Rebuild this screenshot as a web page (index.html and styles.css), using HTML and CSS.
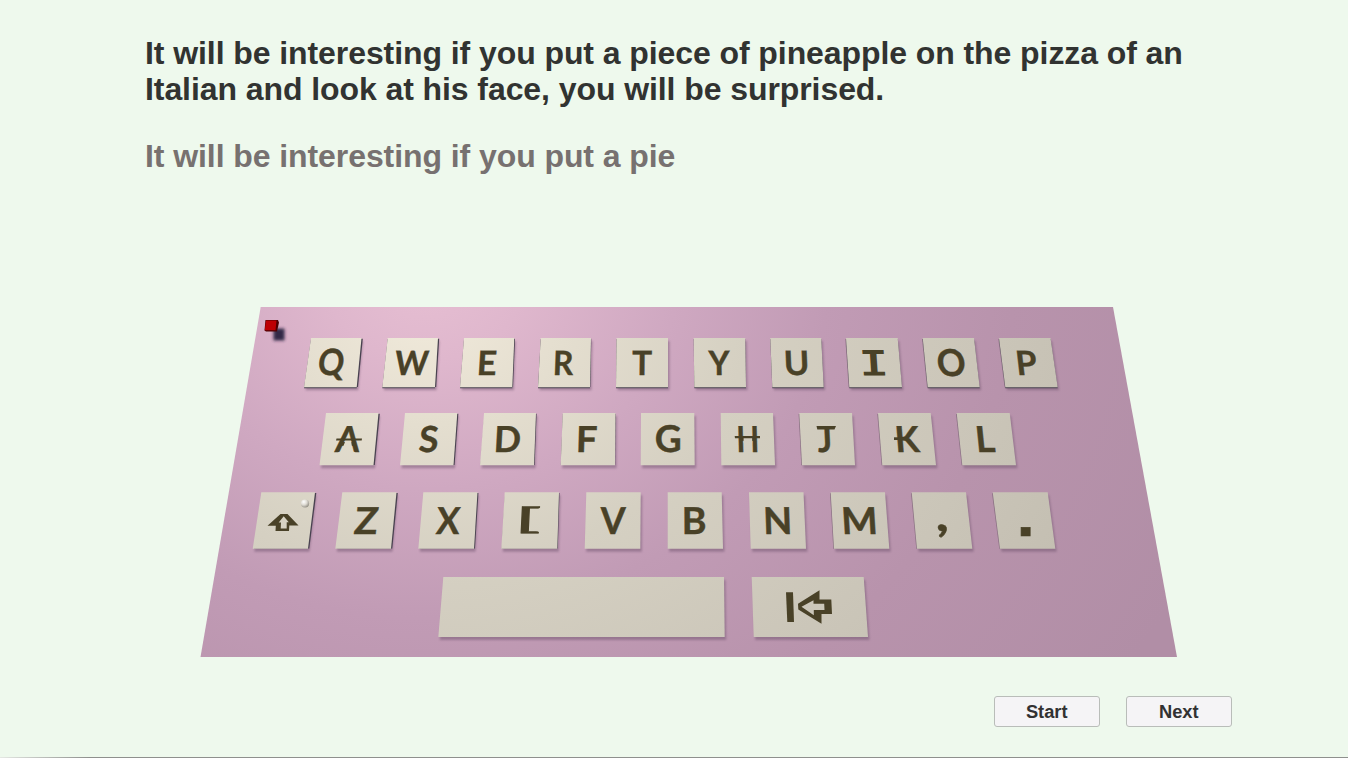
FILE: index.html
```html
<!DOCTYPE html>
<html lang="en">
<head>
<meta charset="utf-8">
<title>Typing exercise</title>
<link rel="stylesheet" href="styles.css">
</head>
<body>
<main class="page">
  <section class="prompt">
    <p class="sentence">It will be interesting if you put a piece of pineapple on the pizza of an<br>Italian and look at his face, you will be surprised.</p>
    <p class="typed">It will be interesting if you put a pie</p>
  </section>
  <svg class="board" viewBox="190 300 1000 370" width="1000" height="370" role="img" aria-label="Keyboard">
    <defs>
      <radialGradient id="felt" gradientUnits="userSpaceOnUse" cx="0" cy="0" r="840" gradientTransform="translate(425 275) scale(1 .85)">
        <stop offset="0" stop-color="#e7bfd3"/><stop offset=".12" stop-color="#dfb7cd"/><stop offset=".3" stop-color="#cfa8c1"/><stop offset=".48" stop-color="#c19bb5"/><stop offset=".7" stop-color="#b893ac"/><stop offset="1" stop-color="#b18ea6"/>
      </radialGradient>
      <radialGradient id="face" gradientUnits="userSpaceOnUse" cx="0" cy="0" r="720" gradientTransform="translate(425 310) scale(1 .8)">
        <stop offset="0" stop-color="#f1eadb"/><stop offset=".2" stop-color="#e4decf"/><stop offset=".45" stop-color="#d5d0c2"/><stop offset=".8" stop-color="#cac5b8"/><stop offset="1" stop-color="#c3beb1"/>
      </radialGradient>
      <radialGradient id="pearl" cx=".35" cy=".3" r=".75">
        <stop offset="0" stop-color="#fff"/><stop offset=".5" stop-color="#dedbd3"/><stop offset="1" stop-color="#8e8a80"/>
      </radialGradient>
      <filter id="blur1" x="-20%" y="-20%" width="140%" height="140%"><feGaussianBlur stdDeviation="1.3"/></filter>
      <filter id="blur2" x="-60%" y="-60%" width="220%" height="220%"><feGaussianBlur stdDeviation="1.7"/></filter>
    </defs>
    <path fill="url(#felt)" d="M260.7 307H1113L1177 657H200.500Z"/>
    <g id="keys"></g>
    <g class="key-face">
      <path d="M345.600 440.500H350.900L352.200 447.800H342.700Z"/>
      <path d="M743.600 438H752.100V443H743.700Z"/>
    </g>
    <g class="ink">
      <path d="M336.500 438.500H362L361.700 440.500H336Z"/>
      <path d="M734.700 436H760V438.300H735Z"/>
      <path d="M894 437.300H908V440H894Z"/>
      <path d="M816.500 426H836L834.500 429.500H817.300Z"/>
      <path fill-rule="evenodd" d="M267.500 525.700 280.500 514H287.500L298.500 525.500H289.300L289 531H275.500L275.800 525.700ZM283.700 516.300 278.700 522.500H281L280.700 528.500H286.700V522.300H288.800Z"/>
      <path d="M786 592.300H793L794 622H787.300Z"/>
      <path fill-rule="evenodd" d="M798 603.700 819.500 590.300V599.500H831.300L832 614H821.500V623.700L798.300 609.500ZM801.500 606.700 813.800 615.300V610H824.500L824.200 603.700H813.500V600.300Z"/>
    </g>
    <rect x="273.500" y="328.500" width="11" height="12" fill="#2c2440" opacity=".95" filter="url(#blur2)"/>
    <path fill="#4d0003" d="M265.500 320H278L279 322.500 277 331.500H266L264.500 330.500Z"/>
    <path fill="#bd0004" d="M266 320.500H276.500L275.500 330.300H264.800Z"/>
    <circle cx="305" cy="503.500" r="4.100" fill="url(#pearl)"/>
  </svg>
  <div class="actions">
    <button class="button">Start</button>
    <button class="button">Next</button>
  </div>
</main>
<script src="keys.js"></script>
</body>
</html>
```
FILE: styles.css
```css
* { box-sizing: border-box; }
body { margin: 0; background: #eef9ed; font-family: "Liberation Sans", Arial, sans-serif; }
.page { display: flex; flex-direction: column; height: 758px; overflow: hidden; }
.page::after { content: ""; height: 1px; margin-top: auto; background: linear-gradient(90deg, #e4e8e3, #8e908d 90px); }
.prompt { height: 300px; padding: 34.500px 0 0 145px; font-size: 32px; letter-spacing: -.08px; line-height: 36.500px; font-weight: 700; white-space: nowrap; }
.sentence { margin: 0; color: #313331; }
.typed { margin: 30px 0 0; color: #777170; }
.board { display: block; flex: none; margin-left: 190px; }
.ink { fill: #494127; }
.letter { fill: #494127; stroke: #494127; stroke-width: .4; font-family: Lato, sans-serif; font-weight: 700; }
.letter.slab { font-family: "DejaVu Sans Mono", monospace; font-weight: 400; stroke-width: 1.200; }
.letter.bracket { font-weight: 400; stroke-width: .5; }
.letter.dot { font-family: "Liberation Sans", sans-serif; }
.key-face { fill: url(#face); }
.key-shadow { fill: #694d68; opacity: .45; filter: url(#blur1); }
.key-side { fill: #494250; }
.key-soft { fill: #8b7284; }
.actions { display: flex; gap: 26.500px; margin: 26px 0 0 994px; }
.button { width: 105.500px; height: 31px; padding: 0; border: 1px solid #b9bdb9; border-radius: 3px; background: #f5f4f6; color: #323232; font: 700 18.300px "Liberation Sans", Arial, sans-serif; }
```
FILE: keys.js
```javascript
// Each key: glyph, top-left x, top-right x, bottom-left x, bottom-right x, ink left, ink right, ink top, ink bottom
const rows = [
  { top: 338, bottom: 387.3, capTop: 350.3, base: 374.7, edge: .9, keys: [
    ["Q", 311, 361.5, 304, 356.7, 318.5, 345, 348.8, 380.5], ["W", 387.7, 438, 382.3, 435, 394, 429.5],
    ["E", 464, 514.3, 460, 512.3, 479, 496.5], ["R", 540.7, 591, 538, 590, 555, 574],
    ["T", 616.5, 668, 616, 668, 632.5, 652], ["Y", 693.7, 745.2, 694.3, 746, 708, 730],
    ["U", 770.3, 821.2, 772.3, 823.7, 785.5, 807.5], ["I", 846, 897.7, 849.3, 902, 863, 884.5],
    ["O", 922.7, 974, 927.7, 979.7, 937.5, 964.7, 348.8, 376.3], ["P", 999, 1050.5, 1005.3, 1057.7, 1017, 1037.5]] },
  { top: 413, bottom: 465.3, capTop: 426, base: 452, edge: 0, keys: [
    ["A", 326, 378.5, 319.5, 373.5, 335, 361], ["S", 405, 457.3, 400, 453.5, 418.7, 438.5],
    ["D", 484, 536, 480, 534, 496, 520.5], ["F", 562.7, 615.5, 560.7, 615, 578.5, 597],
    ["G", 641, 694.3, 640.7, 694.7, 656, 680.3, 425.3, 452.7], ["H", 720.7, 773, 721.3, 775, 738.5, 757.3],
    ["J", 799.3, 852, 802, 855, 817.3, 830.5], ["K", 878, 930.7, 882.3, 936, 896.5, 920.5],
    ["L", 956.7, 1009.7, 962.3, 1016, 977, 995.5]] },
  { top: 492.3, bottom: 548.7, capTop: 506.8, base: 533.7, edge: 0, keys: [
    ["", 261.3, 315, 252.7, 308], ["Z", 342.3, 396.5, 335.3, 391, 354, 378.5],
    ["X", 423.3, 477.5, 418.3, 474, 435.5, 461], ["[", 504.7, 559, 501.3, 557.3, 521, 539.5],
    ["V", 586.3, 640.7, 584.7, 640.3, 600, 626], ["B", 667.7, 721.7, 667.7, 723, 684.5, 705.3],
    ["N", 749, 803.5, 750.7, 806, 765.5, 789.7], ["M", 830.7, 885, 834, 889.3, 843.5, 875.5],
    [",", 911.7, 966, 917, 972.3, 938, 947.3, 524, 537], [".", 992.7, 1047.7, 1000, 1055.3, 1020.7, 1030.3, 527, 535.7]] },
  { top: 577, bottom: 637, capTop: 0, base: 0, edge: 0, keys: [
    ["", 443.3, 724, 438.3, 724.7], ["", 751.7, 863.7, 753.7, 868]] }
];

const styles = {
  "I": { name: " slab", font: '400 200px "DejaVu Sans Mono"' },
  "[": { name: " bracket", font: "400 200px Lato" },
  ".": { name: " dot", font: '700 200px "Liberation Sans"' }
};
const ns = "http://www.w3.org/2000/svg";
const board = document.getElementById("keys");
const pen = document.createElement("canvas").getContext("2d");

function add(tag, attributes) {
  const node = document.createElementNS(ns, tag);
  for (const name in attributes) node.setAttribute(name, attributes[name]);
  board.appendChild(node);
  return node;
}

function quad(tl, tr, bl, br, top, bottom, dx, dy, name) {
  add("path", { class: name, d: `M${tl + dx} ${top + dy}L${tr + dx} ${top + dy}L${br + dx} ${bottom + dy}L${bl + dx} ${bottom + dy}Z` });
}

for (const row of rows) {
  for (const [glyph, tl, tr, bl, br, left, right, inkTop, inkBottom] of row.keys) {
    quad(tl, tr, bl, br, row.top, row.bottom, 1.5, 3, "key-shadow");
    const side = Math.max(0, Math.min(1.3, (640 - tr) / 170));
    if (side) quad(tl, tr, bl, br, row.top + .8, row.bottom - .3, side, 0, "key-side");
    if (tl > 780 && row.top < 560) quad(tl, tr, bl, br, row.top + 1, row.bottom, -.7, 0, "key-soft");
    if (row.edge) quad(tl, tr, bl, br, row.top, row.bottom, 0, row.edge, "key-side");
    quad(tl, tr, bl, br, row.top, row.bottom, 0, 0, "key-face");
    if (!glyph) continue;

    // Fit the glyph's ink box to its place on the tilted key.
    const style = styles[glyph] || { name: "", font: "700 200px Lato" };
    pen.font = style.font;
    const own = pen.measureText(glyph);
    const flat = pen.measureText("H");
    const small = inkTop !== undefined || glyph === "[";
    const ascent = small ? own.actualBoundingBoxAscent : flat.actualBoundingBoxAscent;
    const descent = small ? own.actualBoundingBoxDescent : 0;
    const top = inkTop ?? row.capTop;
    const bottom = inkBottom ?? row.base;
    const sy = (bottom - top) / (ascent + descent);
    const middle = (left + right) / 2;
    const slant = (middle - 676) * (glyph === "." ? 0 : .00033);
    const lean = "AYVT,.OQ".includes(glyph) ? .3 : .85;
    const width = right - left - .3 - Math.abs(slant) * (bottom - top) * lean;
    const sx = width / (own.actualBoundingBoxRight + own.actualBoundingBoxLeft);
    const shift = (own.actualBoundingBoxRight - own.actualBoundingBoxLeft) / 2 * sx;
    const raise = (ascent - descent) / 2 * sy;
    const k = 200 / 36;
    const text = add("text", {
      class: "letter" + style.name,
      "font-size": 36,
      transform: `translate(${middle} ${(top + bottom) / 2}) matrix(1 0 ${slant} 1 0 0) translate(${-shift} ${raise}) scale(${sx * k} ${sy * k})`
    });
    text.textContent = glyph;
  }
}
```
